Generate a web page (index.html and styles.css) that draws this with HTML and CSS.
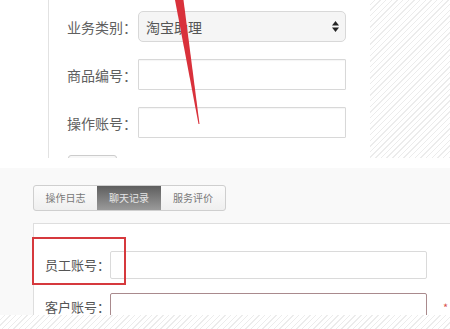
FILE: index.html
```html
<!DOCTYPE html>
<html lang="zh">
<head>
  <meta charset="UTF-8" />
  <meta name="viewport" content="width=device-width, initial-scale=1.0"/>
  <title>表单截图</title>
  <link rel="stylesheet" href="styles.css">
</head>
<body>
  <div class="top">
    <div class="gutter"></div>
    <div class="form">
      <div class="row">
        <label class="label">业务类别：</label>
        <div class="select">
          <span>淘宝助理</span>
          <svg class="updown" width="7" height="11" viewBox="0 0 7 11">
            <polygon points="3.5,0 7,4.5 0,4.5" fill="#222"/>
            <polygon points="0,6.5 7,6.5 3.5,11" fill="#222"/>
          </svg>
        </div>
      </div>
      <div class="row">
        <label class="label">商品编号：</label>
        <input class="field" type="text">
      </div>
      <div class="row">
        <label class="label">操作账号：</label>
        <input class="field" type="text">
      </div>
      <div class="row">
        <button class="btn" aria-label="查询"></button>
      </div>
    </div>
    <div class="hatch"></div>
    <!-- 红色箭头标注 -->
    <svg class="arrow" width="30" height="130" viewBox="0 0 30 130">
      <polygon points="0,0 8.5,0 24.5,124 23.5,124" fill="#d9313b"/>
    </svg>
  </div>

  <div class="gap"></div>

  <div class="bottom">
    <div class="tabs">
      <div class="tab">操作日志</div>
      <div class="tab active">聊天记录</div>
      <div class="tab">服务评价</div>
    </div>
    <div class="panel">
      <div class="mark"></div>
      <div class="row">
        <label class="label2">员工账号：</label>
        <input class="field2" type="text">
      </div>
      <div class="row">
        <label class="label2">客户账号：</label>
        <input class="field2 required" type="text">
        <span class="star">*</span>
      </div>
    </div>
  </div>
  <div class="hatch-strip"></div>
</body>
</html>
```

FILE: styles.css
```css
body {
  margin: 0;
  font-family: "Noto Sans CJK SC", "DejaVu Sans", sans-serif;
  background: #fff;
  width: 450px;
  overflow: hidden;
}

.top {
  position: relative;
  display: flex;
  height: 158px;
  overflow: hidden;
  background: #fff;
}

.gutter {
  width: 48px;
  flex-shrink: 0;
  border-right: 1px solid #e2e2e2;
}

.form {
  width: 321px;
  flex-shrink: 0;
  box-sizing: border-box;
  padding: 11px 0 0 18px;
  display: flex;
  flex-direction: column;
  gap: 17px;
}

.row {
  display: flex;
  align-items: center;
}

.label {
  width: 71px;
  flex-shrink: 0;
  font-size: 14px;
  color: #606060;
}

.select,
.field {
  width: 208px;
  height: 31px;
  box-sizing: border-box;
  border: 1px solid #d8d8d8;
  border-radius: 3px;
  margin: 0;
}

.select {
  display: flex;
  align-items: center;
  justify-content: space-between;
  padding: 0 6px 0 7px;
  background: #f5f5f5;
  font-size: 14px;
  color: #555;
  border-radius: 5px;
}

.field {
  background: #fff;
  border-radius: 1px;
  box-shadow: inset 0 1px 1px rgba(0,0,0,0.04);
}

.btn {
  margin-left: 1px;
  width: 49px;
  height: 30px;
  border: 1px solid #ccc;
  border-radius: 3px;
  background: #f7f7f7;
}

.hatch,
.hatch-strip {
  background: repeating-linear-gradient(135deg, #fff 0, #fff 3px, #ececec 3px, #ececec 4px);
}

.hatch {
  width: 80px;
  flex-shrink: 0;
}

.arrow {
  position: absolute;
  left: 175px;
  top: 0;
}

.gap {
  height: 10px;
  background: #fff;
}

.bottom {
  height: 147px;
  overflow: hidden;
  box-sizing: border-box;
  padding: 15px 0 0 33px;
  background: #f9f9f9;
}

.tabs {
  display: inline-flex;
  height: 26px;
  box-sizing: border-box;
  border: 1px solid #cfcfcf;
  border-radius: 3px;
  overflow: hidden;
  background: linear-gradient(#fcfcfc, #efefef);
}

.tab {
  width: 64px;
  display: flex;
  align-items: center;
  justify-content: center;
  font-size: 10px;
  color: #777;
}

.tab:first-child {
  width: 63px;
}

.tab.active {
  background: linear-gradient(#5e5e5e, #9a9a9a);
  color: #e6e6e6;
}

.panel {
  position: relative;
  margin-top: 12px;
  padding: 27px 0 30px 11px;
  border-top: 1px solid #dedede;
  border-left: 1px solid #dedede;
  background: #fff;
  display: flex;
  flex-direction: column;
  gap: 14px;
}

.label2 {
  width: 65px;
  flex-shrink: 0;
  font-size: 13px;
  color: #555;
}

.field2 {
  width: 317px;
  flex-shrink: 0;
  height: 28px;
  box-sizing: border-box;
  margin: 0;
  border: 1px solid #dadada;
  border-radius: 2px;
  background: #fff;
}

.field2.required {
  border-color: #a98a8d;
}

.star {
  margin-left: 16px;
  color: #d9534f;
  font-size: 11px;
}

.mark {
  position: absolute;
  left: -2px;
  top: 13px;
  width: 94px;
  height: 48px;
  box-sizing: border-box;
  border: 2px solid #d6393d;
}

.hatch-strip {
  height: 14px;
}
```
